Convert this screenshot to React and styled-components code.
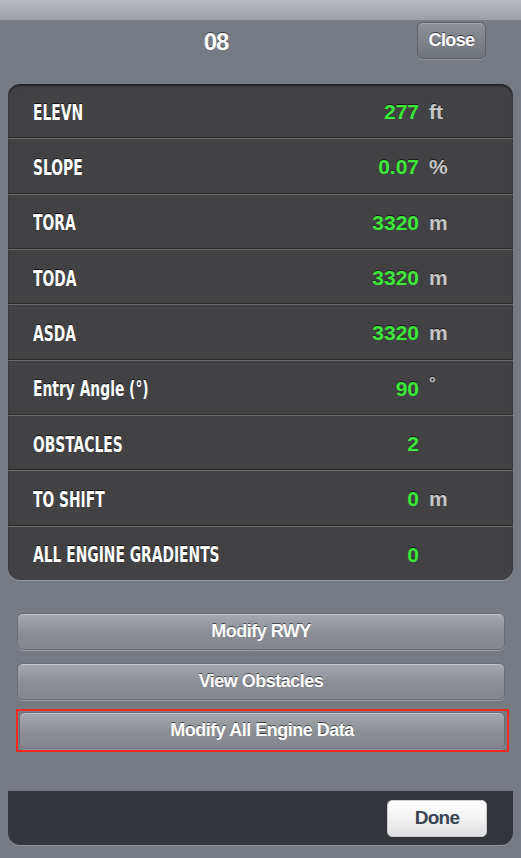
import styled, { createGlobalStyle } from 'styled-components';

const GlobalStyle = createGlobalStyle`
  body {
    margin: 0;
    background: #767a82;
    font-family: "Liberation Sans", Arial, sans-serif;
  }
`;

const rows = [
  { label: 'ELEVN', value: '277', unit: 'ft' },
  { label: 'SLOPE', value: '0.07', unit: '%' },
  { label: 'TORA', value: '3320', unit: 'm' },
  { label: 'TODA', value: '3320', unit: 'm' },
  { label: 'ASDA', value: '3320', unit: 'm' },
  { label: 'Entry Angle (°)', value: '90', unit: '°', small: true },
  { label: 'OBSTACLES', value: '2', unit: '' },
  { label: 'TO SHIFT', value: '0', unit: 'm' },
  { label: 'ALL ENGINE GRADIENTS', value: '0', unit: '' },
];

const App = () => {
  return (
    <Screen>
      <GlobalStyle />
      <TopStrip />
      <Header>
        <Title>08</Title>
        <CloseButton>Close</CloseButton>
      </Header>

      <Panel>
        {rows.map(row => (
          <Row key={row.label}>
            <Label>{row.label}</Label>
            <Value>{row.value}</Value>
            <Unit small={row.small}>{row.unit}</Unit>
          </Row>
        ))}
      </Panel>

      <Actions>
        <ActionButton>Modify RWY</ActionButton>
        <ActionButton>View Obstacles</ActionButton>
        <Highlight>
          <ActionButton>Modify All Engine Data</ActionButton>
        </Highlight>
      </Actions>

      <BottomBar>
        <DoneButton>Done</DoneButton>
      </BottomBar>
    </Screen>
  );
};
export default App;

const Screen = styled.div`
  width: 521px;
  height: 858px;
  display: flex;
  flex-direction: column;
  background: #767a82;
  overflow: hidden;
`;

const TopStrip = styled.div`
  height: 20px;
  background: linear-gradient(#b8bbc1, #9b9ea4);
`;

const Header = styled.div`
  height: 64px;
  display: grid;
  grid-template-columns: 1fr auto;
  align-items: start;
  padding: 2px 35px 0 15px;
  box-sizing: border-box;
`;

const Title = styled.div`
  text-align: center;
  padding-top: 6px;
  color: #fff;
  font-weight: 700;
  font-size: 24px;
  letter-spacing: -1px;
  text-shadow: 0 -1px 0 rgba(0, 0, 0, 0.55);
`;

const CloseButton = styled.button`
  width: 69px;
  height: 37px;
  border-radius: 6px;
  border: 1px solid #5d6066;
  background: linear-gradient(#8d9097, #6f737a);
  box-shadow: inset 0 1px 0 rgba(255, 255, 255, 0.25), 0 1px 0 rgba(255, 255, 255, 0.2);
  color: #fff;
  font-family: "Liberation Sans", Arial, sans-serif;
  font-weight: 700;
  font-size: 18px;
  letter-spacing: -0.6px;
  text-shadow: 0 -1px 0 rgba(0, 0, 0, 0.6);
  padding: 0;
`;

const Panel = styled.div`
  margin: 0 8px;
  height: 496px;
  background: #424244;
  border-radius: 12px;
  box-shadow: inset 0 2px 2px rgba(0, 0, 0, 0.45), 0 1px 0 rgba(255, 255, 255, 0.25);
  display: flex;
  flex-direction: column;
  overflow: hidden;
`;

const Row = styled.div`
  flex: 1;
  display: grid;
  grid-template-columns: 1fr 90px 84px;
  column-gap: 10px;
  align-items: center;
  padding: 3px 0 0 25px;
  border-top: 1px solid #6a6a6c;
  border-bottom: 1px solid #2b2b2c;
  &:first-child {
    border-top: none;
  }
  &:last-child {
    border-bottom: none;
  }
`;

const Label = styled.div`
  color: #fff;
  font-family: "DejaVu Sans Condensed", "DejaVu Sans", sans-serif;
  font-weight: 700;
  font-size: 22px;
  transform: scaleX(0.7);
  transform-origin: left center;
  white-space: nowrap;
  text-shadow: 0 -1px 0 rgba(0, 0, 0, 0.7);
`;

const Value = styled.div`
  text-align: right;
  color: #3ee83a;
  font-weight: 700;
  font-size: 21px;
  text-shadow: 0 -1px 0 rgba(0, 0, 0, 0.6);
`;

const Unit = styled.div`
  color: #c6c6c6;
  font-weight: 700;
  font-size: ${p => (p.small ? '17px' : '21px')};
  align-self: ${p => (p.small ? 'start' : 'center')};
  padding-top: ${p => (p.small ? '10px' : '0')};
  text-shadow: 0 -1px 0 rgba(0, 0, 0, 0.6);
`;

const Actions = styled.div`
  display: flex;
  flex-direction: column;
  gap: 13px;
  padding: 33px 16px 0 17px;
`;

const ActionButton = styled.button`
  height: 37px;
  width: 100%;
  border-radius: 6px;
  border: 1px solid #6b6e74;
  background: linear-gradient(#a6a9ae, #8a8d93 55%, #84878d);
  box-shadow: inset 0 1px 0 rgba(255, 255, 255, 0.3), 0 1px 0 rgba(255, 255, 255, 0.25);
  color: #fff;
  font-family: "Liberation Sans", Arial, sans-serif;
  font-weight: 700;
  font-size: 18px;
  letter-spacing: -0.5px;
  text-shadow: 0 -1px 0 rgba(0, 0, 0, 0.55);
  padding: 0;
`;

const Highlight = styled.div`
  border: 2px solid #f32a22;
  margin: -4px -4px 0 -1px;
  padding: 1px 2px 1px 1px;
`;

const BottomBar = styled.div`
  margin: 39px 8px 0;
  height: 54px;
  background: #34353a;
  border-radius: 0 0 12px 12px;
  display: flex;
  justify-content: flex-end;
  align-items: center;
  padding-right: 26px;
  box-shadow: 0 1px 0 rgba(255, 255, 255, 0.2);
`;

const DoneButton = styled.button`
  width: 100px;
  height: 37px;
  border-radius: 5px;
  border: 1px solid #c9cacd;
  background: linear-gradient(#ffffff, #f2f2f2 50%, #dedfe1);
  color: #3b4455;
  font-family: "Liberation Sans", Arial, sans-serif;
  font-weight: 700;
  font-size: 19px;
  letter-spacing: -0.8px;
  padding: 0;
`;
